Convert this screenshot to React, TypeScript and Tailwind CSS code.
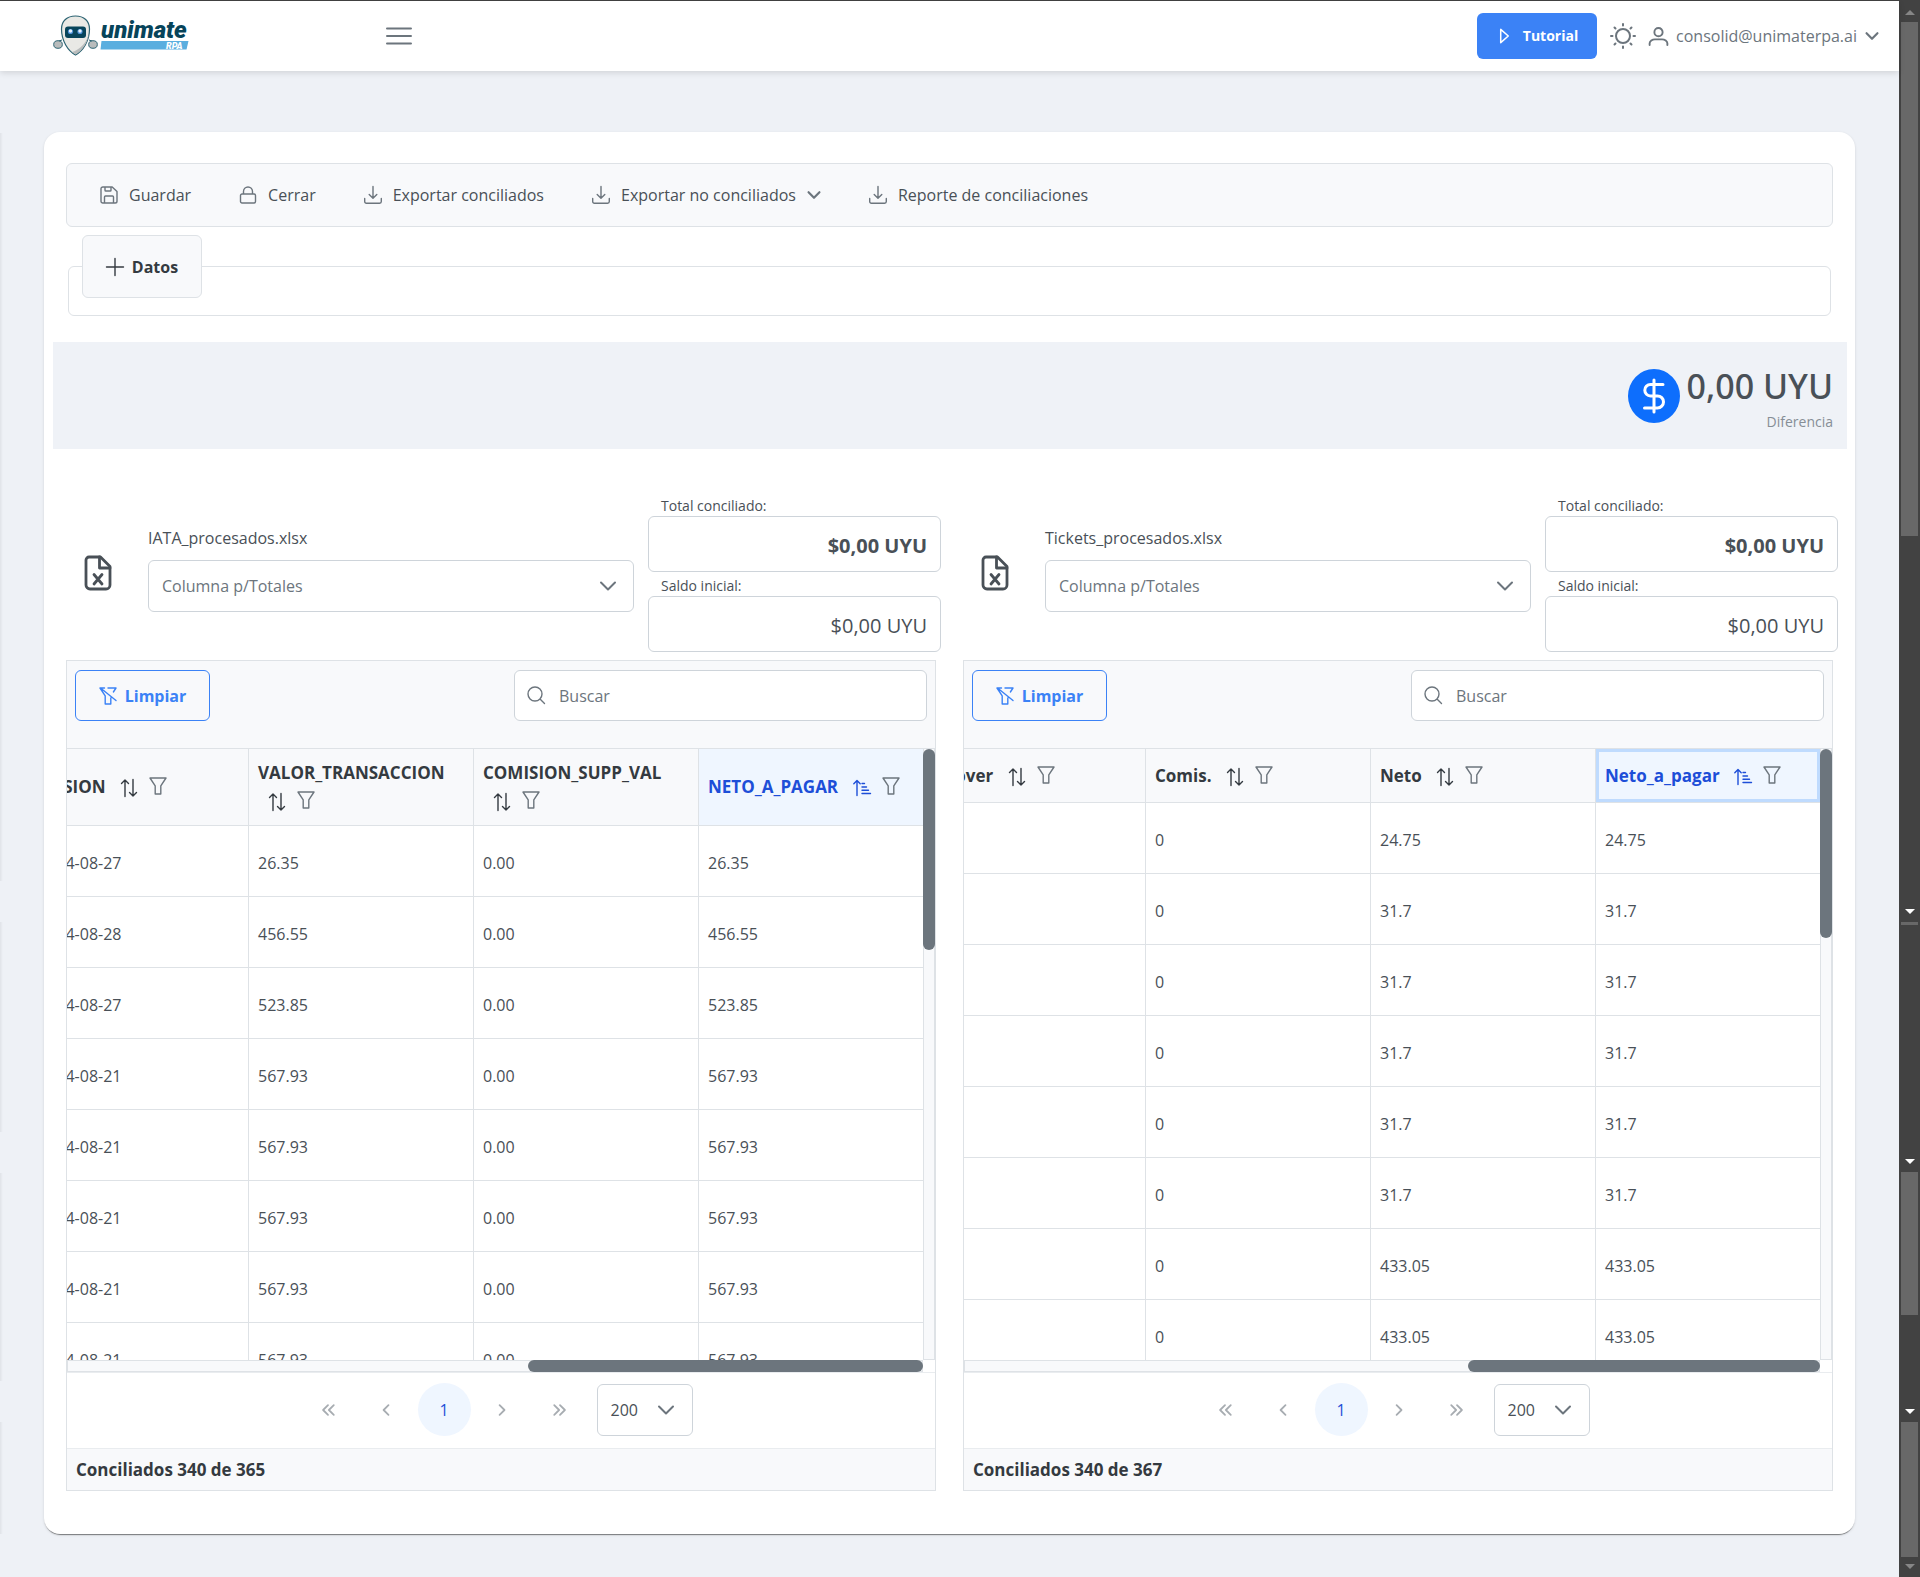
import type { ReactNode } from 'react';

interface Column {
  label: string;
  sorted?: boolean;
}

interface PanelData {
  id: string;
  fileName: string;
  columns: Column[];
  rows: string[][];
  summary: string;
  focusedHeader?: boolean;
  headClass: string;
  vThumbClass: string;
  hThumbClass: string;
}

const PANELS: PanelData[] = [
  {
    id: 'iata',
    fileName: 'IATA_procesados.xlsx',
    columns: [
      { label: 'EMISION' },
      { label: 'VALOR_TRANSACCION' },
      { label: 'COMISION_SUPP_VAL' },
      { label: 'NETO_A_PAGAR', sorted: true },
    ],
    rows: [
      ['2024-08-27', '26.35', '0.00', '26.35'],
      ['2024-08-28', '456.55', '0.00', '456.55'],
      ['2024-08-27', '523.85', '0.00', '523.85'],
      ['2024-08-21', '567.93', '0.00', '567.93'],
      ['2024-08-21', '567.93', '0.00', '567.93'],
      ['2024-08-21', '567.93', '0.00', '567.93'],
      ['2024-08-21', '567.93', '0.00', '567.93'],
      ['2024-08-21', '567.93', '0.00', '567.93'],
    ],
    summary: 'Conciliados 340 de 365',
    headClass: 'h-[77px]',
    vThumbClass: 'h-[201px]',
    hThumbClass: 'w-[395px]',
  },
  {
    id: 'tickets',
    fileName: 'Tickets_procesados.xlsx',
    columns: [{ label: 'Co.over' }, { label: 'Comis.' }, { label: 'Neto' }, { label: 'Neto_a_pagar', sorted: true }],
    rows: [
      ['', '0', '24.75', '24.75'],
      ['', '0', '31.7', '31.7'],
      ['', '0', '31.7', '31.7'],
      ['', '0', '31.7', '31.7'],
      ['', '0', '31.7', '31.7'],
      ['', '0', '31.7', '31.7'],
      ['', '0', '433.05', '433.05'],
      ['', '0', '433.05', '433.05'],
    ],
    summary: 'Conciliados 340 de 367',
    focusedHeader: true,
    headClass: 'h-[54px]',
    vThumbClass: 'h-[189px]',
    hThumbClass: 'w-[352px]',
  },
];

const ICON_PATHS = {
  save: 'M2.8 1h9.4L17 5.6v9.6a1.8 1.8 0 0 1-1.8 1.8H2.8A1.8 1.8 0 0 1 1 15.2V2.8A1.8 1.8 0 0 1 2.8 1zM5 1v3.2a.8.8 0 0 0 .8.8h4.4a.8.8 0 0 0 .8-.8V1M4.500 17v-6a1 1 0 0 1 1-1h7a1 1 0 0 1 1 1v6',
  lock: 'M4.500 8V5.500a4.500 4.500 0 0 1 9 0V8M3 8h12a1.500 1.500 0 0 1 1.500 1.500v6A1.500 1.500 0 0 1 15 17H3a1.500 1.500 0 0 1-1.500-1.500v-6A1.500 1.500 0 0 1 3 8z',
  download: 'M9 .5v11.500M5.200 8.400 9 12.200l3.800-3.800M.7 12.500v3A1.700 1.700 0 0 0 2.400 17.200h13.200a1.700 1.700 0 0 0 1.700-1.700v-3',
  plus: 'M9 .5v17M.5 9h17',
  filter: 'M1 1h16l-5.200 7.800V17H6.200V8.800z',
  filterSlash: 'M1 1h4.500M9 1h8l-2.600 4M1 1l5.200 7.800V17h5.600v-6M1.500 1 17 13.500',
  sort: 'M5 17.500V1M1.500 4.500 5 1l3.500 3.500M13 .5V17M9.500 13.500 13 17l3.500-3.500',
  sortAmount: 'M4 16.500V1.500M.8 4.700 4 1.500l3.200 3.200M9 4.500h2.500M9 8h4.500M9 11.300h6.500M9 14.500h8.500',
  chevron: 'M2 5.500l7 7 7-7',
  search: 'M8 1a7 7 0 1 1 0 14A7 7 0 0 1 8 1zM13 13l4.500 4.500',
  play: 'M5 1.500v14L13 8.500z',
  user: 'M9 1a3.900 3.900 0 1 1 0 7.800A3.900 3.900 0 0 1 9 1zM.6 17v-1.500c0-2 2.500-3.800 5-3.800h6.800c2.500 0 5 1.800 5 3.800V17',
  menu: 'M.7 3.800h16.600M.7 9h16.600M.7 14.200h16.600',
  first: 'M9 3.500 3.500 9 9 14.500M15.500 3.500 10 9l5.500 5.500',
  prev: 'M11.800 3.500 6.300 9l5.500 5.500',
  next: 'M6.300 3.500 11.800 9l-5.500 5.500',
  last: 'M2.500 3.500 8 9l-5.500 5.500M9 3.500 14.500 9 9 14.500',
};

type IconName = keyof typeof ICON_PATHS;

function Icon({ name, className = 'size-[18px]', stroke = 1.4 }: { name: IconName; className?: string; stroke?: number }) {
  return (
    <svg
      viewBox="0 0 18 18"
      fill="none"
      stroke="currentColor"
      strokeWidth={stroke}
      strokeLinecap="round"
      strokeLinejoin="round"
      aria-hidden="true"
      className={`shrink-0 overflow-visible ${className}`}
    >
      <path d={ICON_PATHS[name]} />
    </svg>
  );
}

function Logo() {
  return (
    <svg viewBox="0 0 140 42" role="img" aria-label="unimate RPA" className="h-[42px] w-[140px]">
      <ellipse cx="5" cy="29.500" rx="4.300" ry="3.800" fill="#b9bcbc" stroke="#2d6473" />
      <path d="M6 26l3-1" stroke="#2d6473" />
      <ellipse cx="40" cy="29.500" rx="4.300" ry="3.800" fill="#b9bcbc" stroke="#2d6473" />
      <path d="M39 26l-3-1" stroke="#2d6473" />
      <path d="M22.500 1C14 1 8.500 6 8.500 14c0 12 6.500 22 14 26 7.500-4 14-14 14-26C36.500 6 31 1 22.500 1z" fill="#e9e9e5" stroke="#2d6473" strokeWidth="1.200" />
      <path d="M36 18c-1 8-9 17-17 19l3.500 2.500C29 36 35 28 36 18z" fill="#b9bcbc" />
      <rect x="12" y="11.500" width="21" height="11.500" rx="3" fill="#07445a" />
      <circle cx="17.500" cy="16.500" r="2.600" fill="#4b8fd6" />
      <circle cx="27" cy="16.500" r="2.600" fill="#4b8fd6" />
      <circle cx="17.500" cy="16" r="1.700" fill="#e5f1fc" />
      <circle cx="27" cy="16" r="1.700" fill="#e5f1fc" />
      <text x="48" y="23" fill="#07445a" fontFamily="Roboto, sans-serif" fontSize="24" fontWeight="900" fontStyle="italic">
        unimate
      </text>
      <path d="M48.500 26h87l-2 8.500h-86z" fill="#5aaedf" />
      <text x="113" y="33.500" fill="#fff" fontFamily="Roboto, sans-serif" fontSize="9" fontWeight="900" fontStyle="italic">
        RPA
      </text>
    </svg>
  );
}

function SunIcon() {
  return (
    <svg viewBox="0 0 26 26" fill="none" stroke="currentColor" strokeWidth="2" strokeLinecap="round" aria-hidden="true" className="size-[26px]">
      <circle cx="13" cy="13" r="7" />
      <path d="M13 1v1.500M13 23.500V25M1 13h1.500M23.500 13H25M4.500 4.500l1 1M20.500 20.500l1 1M4.500 21.500l1-1M20.500 5.500l1-1" />
    </svg>
  );
}

function Topbar() {
  return (
    <header className="relative flex h-[70px] items-center bg-white pr-5 pl-[53px] text-[#6c757d] shadow-[0_2px_6px_rgba(0,0,0,0.12)]">
      <a href="#inicio">
        <Logo />
      </a>
      <button type="button" aria-label="Menú" className="ml-[193px]">
        <Icon name="menu" className="size-[26px]" stroke={1.4} />
      </button>
      <div className="ml-auto flex items-center">
        <button type="button" className="flex h-[46px] w-[120px] items-center justify-center gap-2.5 rounded-md bg-[#3b82f6] text-sm font-bold text-white">
          <Icon name="play" className="size-[17px]" stroke={1.6} />
          Tutorial
        </button>
        <button type="button" aria-label="Cambiar tema" className="ml-[13px]">
          <SunIcon />
        </button>
        <button type="button" className="ml-[13px] flex items-center gap-2">
          <Icon name="user" className="size-[19px]" stroke={1.8} />
          <span>consolid@unimaterpa.ai</span>
          <Icon name="chevron" className="size-[14px]" stroke={2.8} />
        </button>
      </div>
    </header>
  );
}

function MenuItem({ icon, children, dropdown = false }: { icon: IconName; children: ReactNode; dropdown?: boolean }) {
  return (
    <button type="button" className="flex items-center gap-[11px]">
      <Icon name={icon} className="size-[18px] text-[#6c757d]" />
      {children}
      {dropdown && <Icon name="chevron" className="size-[14px] text-[#6c757d]" stroke={2.8} />}
    </button>
  );
}

function FileIcon() {
  return (
    <svg viewBox="0 0 28 36" fill="none" stroke="#495057" strokeWidth="2.800" strokeLinejoin="round" strokeLinecap="round" aria-hidden="true" className="h-[36px] w-[28px]">
      <path d="M5 2h11.500L26 11.500V30a4 4 0 0 1-4 4H6a4 4 0 0 1-4-4V5a3 3 0 0 1 3-3z" />
      <path d="M15.500 2v11H26M10 19.500l8 9.500M18 19.500 10 29" />
    </svg>
  );
}

function AmountField({ id, label, bold = false }: { id: string; label: string; bold?: boolean }) {
  return (
    <div>
      <label htmlFor={id} className="block pl-[13px] text-sm leading-5">
        {label}
      </label>
      <input
        id={id}
        readOnly
        value="$0,00 UYU"
        className={`h-14 w-full rounded-md border border-[#ced4da] bg-white px-[13px] pt-0.5 text-right text-xl ${bold ? 'font-bold' : ''}`}
      />
    </div>
  );
}

function HeaderCell({ column, focused }: { column: Column; focused: boolean }) {
  const tone = column.sorted ? 'bg-[#eff6ff] text-[#1d4ed8]' : 'text-[#343a40]';
  return (
    <th
      scope="col"
      className={`border-b border-l border-[#dee2e6] px-[9px] text-left align-middle text-[17px] leading-7 font-bold first:border-l-0 ${tone} ${
        focused ? 'shadow-[inset_0_0_0_3px_#bfdbfe]' : ''
      }`}
    >
      {column.label}{' '}
      <span className="inline-flex items-center gap-[11px] pl-2.5 align-middle">
        <Icon name={column.sorted ? 'sortAmount' : 'sort'} />
        <button type="button" aria-label={`Filtrar ${column.label}`} className="pb-1 text-[#6c757d]">
          <Icon name="filter" />
        </button>
      </span>
    </th>
  );
}

function Paginator({ id }: { id: string }) {
  const arrow = 'flex size-[53px] items-center justify-center text-[#6c757d]/60';
  return (
    <nav aria-label="Paginación" className="flex h-[75px] items-center justify-center gap-[5px] pr-2 pb-0.5">
      <button type="button" aria-label="Primera página" className={arrow}>
        <Icon name="first" className="size-4" stroke={2} />
      </button>
      <button type="button" aria-label="Página anterior" className={arrow}>
        <Icon name="prev" className="size-4" stroke={2} />
      </button>
      <button type="button" className="size-[53px] rounded-full bg-[#eff6ff] text-[#1d4ed8]">
        1
      </button>
      <button type="button" aria-label="Página siguiente" className={arrow}>
        <Icon name="next" className="size-4" stroke={2} />
      </button>
      <button type="button" aria-label="Última página" className={arrow}>
        <Icon name="last" className="size-4" stroke={2} />
      </button>
      <div className="relative ml-[5px]">
        <select
          id={`${id}-page-size`}
          aria-label="Filas por página"
          className="h-[52px] w-24 appearance-none rounded-md border border-[#ced4da] bg-white px-[13px]"
        >
          <option>200</option>
        </select>
        <Icon name="chevron" className="pointer-events-none absolute top-[17px] right-[18px] size-[18px] text-[#6c757d]" stroke={2} />
      </div>
    </nav>
  );
}

function DataPanel({ panel }: { panel: PanelData }) {
  return (
    <section className="min-w-0">
      <div className="mr-[-5px] mb-2 flex">
        <div className="flex w-[82px] shrink-0 pt-[59px] pl-[18px]">
          <FileIcon />
        </div>
        <div className="min-w-0 flex-1 pt-[30px]">
          <label htmlFor={`${panel.id}-column`} className="mb-2.5 block">
            {panel.fileName}
          </label>
          <div className="relative">
            <select
              id={`${panel.id}-column`}
              className="h-[52px] w-full appearance-none rounded-md border border-[#ced4da] bg-white px-[13px] text-[#6c757d]"
            >
              <option>Columna p/Totales</option>
            </select>
            <Icon name="chevron" className="pointer-events-none absolute top-[17px] right-[17px] size-[18px] text-[#6c757d]" stroke={2} />
          </div>
        </div>
        <div className="ml-3.5 flex w-[293px] shrink-0 flex-col gap-1">
          <AmountField id={`${panel.id}-total`} label="Total conciliado:" bold />
          <AmountField id={`${panel.id}-balance`} label="Saldo inicial:" />
        </div>
      </div>

      <div className="border border-[#dee2e6]">
        <div className="flex items-start justify-between border-b border-[#dee2e6] bg-[#f8f9fb] px-2 pt-[9px] pb-[27px]">
          <button
            type="button"
            className="flex h-[51px] w-[135px] items-center justify-center gap-2 rounded-md border border-[#3b82f6] font-bold text-[#3b82f6]"
          >
            <Icon name="filterSlash" />
            Limpiar
          </button>
          <div className="relative w-[413px]">
            <Icon name="search" className="pointer-events-none absolute top-[16px] left-[13px] size-[18px] text-[#6c757d]" />
            <input
              type="search"
              aria-label="Buscar"
              placeholder="Buscar"
              className="h-[51px] w-full rounded-md border border-[#ced4da] bg-white pr-3 pl-11 placeholder:text-[#6c757d]"
            />
          </div>
        </div>

        <div className="flex h-[611px]">
          <div className="flex min-w-0 flex-1 items-start justify-end overflow-hidden">
            <table className="w-[900px] shrink-0 table-fixed border-separate border-spacing-0">
              <thead>
                <tr className={`bg-[#f8f9fb] ${panel.headClass}`}>
                  {panel.columns.map((column) => (
                    <HeaderCell key={column.label} column={column} focused={!!panel.focusedHeader && !!column.sorted} />
                  ))}
                </tr>
              </thead>
              <tbody>
                {panel.rows.map((row, rowIndex) => (
                  <tr key={rowIndex} className="h-[71px]">
                    {row.map((cell, cellIndex) => (
                      <td
                        key={cellIndex}
                        className="border-b border-l border-[#dee2e6] px-[9px] pt-[3px] first:border-l-0 first:pl-[15px]"
                      >
                        {cell}
                      </td>
                    ))}
                  </tr>
                ))}
              </tbody>
            </table>
          </div>
          <div className="w-3 shrink-0 border border-t-0 border-[#dee2e6] bg-[#f8f9fb]">
            <div className={`-mx-px rounded-full bg-[#6c757d] ${panel.vThumbClass}`} />
          </div>
        </div>
        <div className="mr-3 flex h-3 justify-end bg-[#f8f9fb] inset-ring inset-ring-[#dee2e6]">
          <div className={`rounded-full bg-[#6c757d] ${panel.hThumbClass}`} />
        </div>

        <div className="border-y border-[#e9ecef]">
          <Paginator id={panel.id} />
        </div>
        <div className="bg-[#f8f9fb] px-[9px] pt-[9px] pb-2 text-[17px] leading-6 font-bold text-[#343a40]">{panel.summary}</div>
      </div>
    </section>
  );
}

function ScrollArrow({ up = false, className }: { up?: boolean; className: string }) {
  return (
    <svg viewBox="0 0 10 5" fill="currentColor" aria-hidden="true" className={`mx-auto h-[5px] w-[10px] shrink-0 ${className}`}>
      <path d={up ? 'M0 5 5 0l5 5z' : 'M0 0h10L5 5z'} />
    </svg>
  );
}

function ScrollRail() {
  return (
    <div aria-hidden="true" className="flex w-[21px] shrink-0 flex-col bg-[#424242] px-0.5">
      <ScrollArrow up className="mt-[9px] text-[#868686]" />
      <div className="mt-[7px] h-[514px] bg-[#686868]" />
      <ScrollArrow className="mt-[373px] text-white" />
      <div className="mt-[8px] h-[3px] bg-[#686868]" />
      <ScrollArrow className="mt-[234px] text-white" />
      <div className="mt-[8px] h-[143px] bg-[#686868]" />
      <ScrollArrow className="mt-[94px] text-white" />
      <div className="mt-[8px] h-[135px] bg-[#686868]" />
      <ScrollArrow className="mt-[7px] text-[#868686]" />
    </div>
  );
}

// Shadow cast by the collapsed side menu
function MenuShadow() {
  return (
    <div aria-hidden="true" className="absolute top-[132px] left-0 flex w-[3px] flex-col gap-[41px] *:bg-linear-to-r *:from-black/6 *:to-transparent">
      <div className="h-[748px]" />
      <div className="h-[210px]" />
      <div className="h-[208px]" />
      <div className="h-[112px]" />
    </div>
  );
}

export default function App() {
  return (
    <div className="relative flex min-h-screen border-t border-[#424242] bg-[#eef1f6] font-['Open_Sans','Noto_Sans',sans-serif] text-base text-[#495057]">
      <MenuShadow />
      <div className="min-w-0 flex-1">
        <Topbar />
        <main className="mx-11 mt-[61px] mb-[43px] rounded-2xl bg-white pt-[31px] pr-2 pb-[43px] pl-[9px] shadow-[0_2px_1px_-1px_rgba(0,0,0,0.45),0_1px_3px_rgba(0,0,0,0.12)]">
          <div className="pr-3.5 pl-[13px]">
            <div className="flex h-16 items-center gap-12 rounded-md border border-[#dee2e6] bg-[#f8f9fb] px-[33px]">
              <MenuItem icon="save">Guardar</MenuItem>
              <MenuItem icon="lock">Cerrar</MenuItem>
              <MenuItem icon="download">Exportar conciliados</MenuItem>
              <MenuItem icon="download" dropdown>
                Exportar no conciliados
              </MenuItem>
              <MenuItem icon="download">Reporte de conciliaciones</MenuItem>
            </div>
            <fieldset className="mx-0.5 mt-2 rounded-md border border-[#dee2e6] px-[13px] pb-[17px]">
              <legend>
                <button
                  type="button"
                  className="flex h-[63px] w-[120px] items-center justify-center gap-2 rounded-md border border-[#dee2e6] bg-[#f8f9fb] font-bold text-[#343a40]"
                >
                  <Icon name="plus" />
                  Datos
                </button>
              </legend>
            </fieldset>
          </div>

          <div className="mt-[26px] flex h-[107px] justify-end bg-[#eff2f7] pr-3.5">
            <div className="mt-[27px] mr-1.5 flex h-[54px] w-[52px] items-center justify-center rounded-[50%] bg-[#0d6efd] text-white">
              <svg viewBox="0 0 24 36" fill="none" stroke="currentColor" strokeWidth="3" strokeLinecap="round" strokeLinejoin="round" aria-hidden="true" className="h-[36px] w-[24px]">
                <path d="M12 2v32M21 6.500H8.500a5.700 5.700 0 0 0 0 11.400h7a6 6 0 0 1 0 12H2.500" />
              </svg>
            </div>
            <div className="pt-5 text-right">
              <div className="font-['Noto_Sans','Open_Sans',sans-serif] text-[34px] leading-[48px] font-medium">0,00 UYU</div>
              <div className="text-sm leading-6 text-[#868e96]">Diferencia</div>
            </div>
          </div>

          <div className="mt-[47px] grid grid-cols-2 gap-[27px] pr-3.5 pl-[13px]">
            {PANELS.map((panel) => (
              <DataPanel key={panel.id} panel={panel} />
            ))}
          </div>
        </main>
      </div>
      <ScrollRail />
    </div>
  );
}
